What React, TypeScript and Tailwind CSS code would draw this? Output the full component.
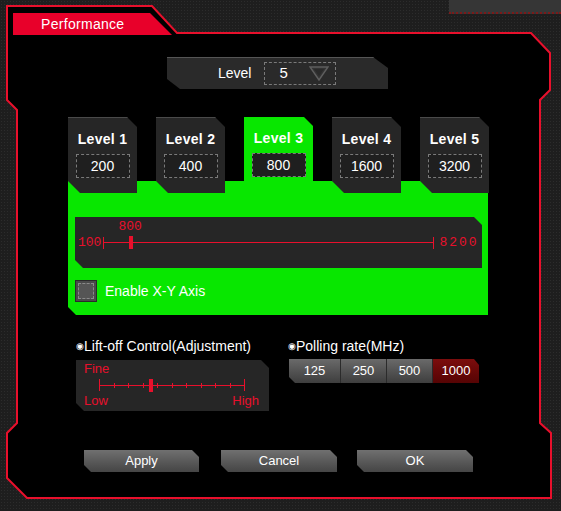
import React from "react";

const RED = "#e8102c";

// chamfered shapes (top-right + bottom-left corners cut)
const tabShape =
  "[clip-path:polygon(0_0,calc(100%_-_10px)_0,100%_10px,100%_100%,12px_100%,0_calc(100%_-_12px))]";
const activeTabShape = "[clip-path:polygon(0_0,calc(100%_-_9px)_0,100%_9px,100%_100%,0_100%)]";
const panelShape =
  "[clip-path:polygon(0_0,calc(100%_-_8px)_0,100%_8px,100%_100%,8px_100%,0_calc(100%_-_8px))]";
const btnShape =
  "[clip-path:polygon(0_0,calc(100%_-_7px)_0,100%_7px,100%_100%,7px_100%,0_calc(100%_-_7px))]";

const levels = [
  { name: "Level 1", dpi: 200 },
  { name: "Level 2", dpi: 400 },
  { name: "Level 3", dpi: 800, active: true },
  { name: "Level 4", dpi: 1600 },
  { name: "Level 5", dpi: 3200 },
];

const rates = [
  { v: 125, w: "w-[51px]" },
  { v: 250, w: "w-[46px]" },
  { v: 500, w: "w-[46px]" },
  { v: 1000, w: "w-[47px]", active: true },
];

function Frame() {
  return (
    <svg className="absolute inset-0 pointer-events-none" width="561" height="511">
      <polygon
        points="7,6 152,6 177,33 531,33 550,53 550,90 540,100 540,423 551,433 551,498 27,498 7,478 7,433 17,423 17,110 7,100"
        fill="#000"
        stroke={RED}
        strokeWidth="2"
      />
    </svg>
  );
}

function LevelTab({ name, dpi, active }: { name: string; dpi: number; active?: boolean }) {
  return (
    <div
      className={`w-[69px] h-[76px] flex flex-col items-center pt-[12px] ${
        active ? `bg-[#08e700] ${activeTabShape}` : `bg-[#262626] border-t border-[#4a4a4a] ${tabShape}`
      }`}
    >
      <div className="text-[14px] font-bold text-white leading-[18px] tracking-[0.3px]">{name}</div>
      <div className="mt-[6px] w-[54px] h-[24px] border border-dashed border-[#7a7a7a] bg-[#1f1f1f] flex items-center justify-center text-[14px] text-white">
        {dpi}
      </div>
    </div>
  );
}

function DpiSlider() {
  return (
    <div className={`w-[407px] h-[51px] bg-[#262626] ${panelShape} flex items-center pl-[3px]`}>
      <span className="font-['Liberation_Mono',monospace] text-[13px] text-[#e8102c] leading-none">100</span>
      <div className="relative ml-[2px] w-[331px] h-[12px]">
        <div className="absolute left-0 right-0 top-[5px] h-[1px] bg-[#e8102c]" />
        <div className="absolute left-0 top-0 w-[1px] h-[12px] bg-[#e8102c]" />
        <div className="absolute right-0 top-0 w-[1px] h-[12px] bg-[#e8102c]" />
        <div className="absolute left-[26px] top-[-1px] w-[4px] h-[13px] bg-[#e8102c]" />
        <span className="absolute left-[15px] top-[-17px] font-['Liberation_Mono',monospace] text-[13px] text-[#e8102c] leading-none">
          800
        </span>
      </div>
      <span className="ml-[5px] font-['Liberation_Mono',monospace] text-[13px] text-[#e8102c] leading-none tracking-[2px]">
        8200
      </span>
    </div>
  );
}

function LiftOff() {
  const ticks = Array.from({ length: 11 }, (_, i) => i);
  return (
    <div className={`h-[51px] bg-[#262626] ${panelShape} px-[8px] pt-[2px] text-[13px] text-[#e8102c]`}>
      <div className="leading-[14px]">Fine</div>
      <div className="relative mt-[3px] ml-[15px] w-[146px] h-[12px]">
        <div className="absolute left-0 right-0 top-[6px] h-[1px] bg-[#e8102c]" />
        {ticks.map((i) => {
          const end = i === 0 || i === 10;
          return (
            <div
              key={i}
              className={`absolute w-[1px] bg-[#e8102c] ${end ? "top-0 h-[12px]" : "top-[4px] h-[5px]"}`}
              style={{ left: `${(i * 145) / 10}px` }}
            />
          );
        })}
        <div className="absolute left-[50px] top-0 w-[4px] h-[13px] bg-[#e8102c]" />
      </div>
      <div className="mt-[3px] flex justify-between pr-[2px] leading-[14px]">
        <span>Low</span>
        <span>High</span>
      </div>
    </div>
  );
}

function PollingRate() {
  return (
    <div
      className={`ml-[1px] mt-[5px] flex h-[24px] w-[190px] [clip-path:polygon(0_0,calc(100%_-_5px)_0,100%_6px,100%_100%,6px_100%,0_calc(100%_-_6px))]`}
    >
      {rates.map((r, i) => (
        <div
          key={r.v}
          className={`${r.w} h-full flex items-center justify-center text-[13px] text-white ${
            r.active
              ? "bg-gradient-to-b from-[#7c0d0d] to-[#560404]"
              : "bg-gradient-to-b from-[#6a6a6a] to-[#3e3e3e]"
          } ${i > 0 ? "border-l border-[#2b2b2b]" : ""}`}
        >
          {r.v}
        </div>
      ))}
    </div>
  );
}

function Button({ label, w }: { label: string; w: string }) {
  return (
    <div
      className={`${w} h-[22px] ${btnShape} bg-gradient-to-b from-[#707070] to-[#454545] flex items-center justify-center text-[13px] text-white`}
    >
      {label}
    </div>
  );
}

export default function App() {
  return (
    <div className="relative w-[561px] h-[511px] overflow-hidden bg-[#1e1e1e] bg-[radial-gradient(#2c2c2c_1px,transparent_1px)] bg-[length:3px_3px] font-['Liberation_Sans',Arial,sans-serif]">
      {/* window behind, peeking out at top right */}
      <div className="absolute top-0 right-0 w-[112px] h-[14px] bg-[#363636] border-b-2 border-dotted border-[#7a1a1a]" />

      <Frame />

      <div className="relative flex flex-col pt-[13px]">
        {/* section tab */}
        <div className="ml-[13px] w-[159px] h-[22px] bg-[#e8002a] [clip-path:polygon(0_0,137px_0,100%_100%,0_100%)] pl-[28px] text-[14px] leading-[22px] text-white tracking-[0.3px]">
          Performance
        </div>

        {/* level count selector */}
        <div className="mt-[22px] ml-[167px] w-[221px] h-[32px] bg-[#2a2a2a] border-t border-[#555] [clip-path:polygon(0_0,206px_0,100%_11px,100%_100%,13px_100%,0_calc(100%_-_10px))] flex items-center">
          <span className="ml-[51px] text-[14px] text-white">Level</span>
          <div className="ml-[13px] w-[72px] h-[23px] border border-dashed border-[#7a7a7a] flex items-center">
            <span className="ml-[14px] text-[15px] text-white">5</span>
            <svg className="ml-[21px]" width="20" height="15" viewBox="0 0 20 15">
              <polygon points="1,1 19,1 10,14" fill="#333" stroke="#5e5e5e" strokeWidth="1.5" />
              <polygon points="5,3 15,3 10,10" fill="#2a2a2a" />
            </svg>
          </div>
        </div>

        {/* DPI levels */}
        <div className="mt-[28px] ml-[68px] w-[421px]">
          <div className="relative z-10 flex gap-[19px]">
            {levels.map((l) => (
              <LevelTab key={l.name} {...l} />
            ))}
          </div>
          <div className="mt-[-12px] w-[420px] h-[134px] bg-[#08e700] [clip-path:polygon(0_0,100%_0,100%_100%,8px_100%,0_calc(100%_-_8px))] pt-[36px] pl-[7px]">
            <DpiSlider />
            <div className="mt-[12px] flex items-center gap-[8px]">
              <div className="w-[22px] h-[22px] bg-[#4a4a4a] border border-[#2a2a2a] p-[2px]">
                <div className="w-full h-full bg-[#555] border border-dashed border-[#8a8a8a]" />
              </div>
              <span className="text-[14px] text-white">Enable X-Y Axis</span>
            </div>
          </div>
        </div>

        {/* lift-off + polling */}
        <div className="mt-[23px] ml-[76px] flex gap-[19px]">
          <div className="w-[193px]">
            <div className="h-[16px] leading-[16px] text-[14px] text-white whitespace-nowrap">
              <span className="text-[9px] align-[2px]">◉</span>Lift-off Control(Adjustment)
            </div>
            <div className="mt-[6px]">
              <LiftOff />
            </div>
          </div>
          <div>
            <div className="h-[16px] leading-[16px] text-[14px] text-white whitespace-nowrap">
              <span className="text-[9px] align-[2px]">◉</span>Polling rate(MHz)
            </div>
            <PollingRate />
          </div>
        </div>

        {/* actions */}
        <div className="mt-[39px] ml-[84px] flex">
          <Button label="Apply" w="w-[115px]" />
          <div className="ml-[22px]">
            <Button label="Cancel" w="w-[116px]" />
          </div>
          <div className="ml-[20px]">
            <Button label="OK" w="w-[116px]" />
          </div>
        </div>
      </div>
    </div>
  );
}
